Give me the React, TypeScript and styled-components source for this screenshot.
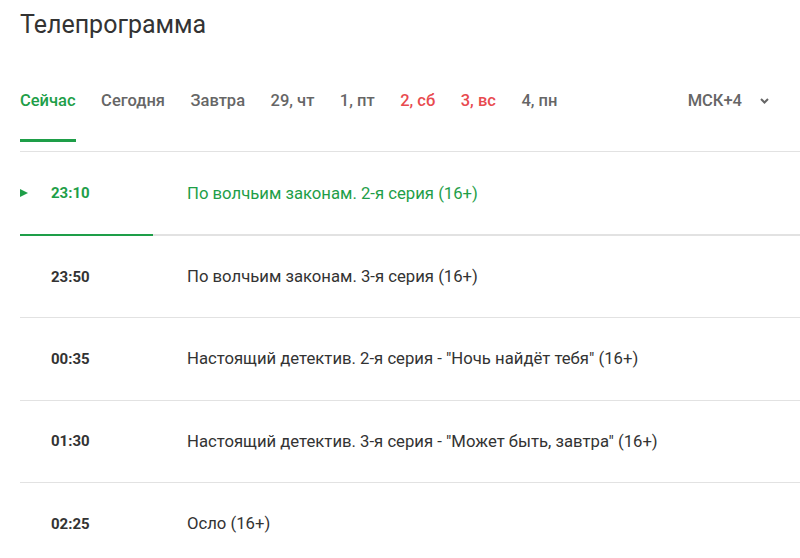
import React from "react";
import styled, { createGlobalStyle } from "styled-components";

const GREEN = "#1e9e48";
const RED = "#e84a4f";

const Global = createGlobalStyle`
  html, body { margin: 0; padding: 0; background: #fff; overflow: hidden; }
  body { font-family: Roboto, "Noto Sans", Arial, sans-serif; color: #333; }
`;

const Page = styled.div`
  padding-left: 20px;
`;

const Title = styled.h1`
  margin: 0;
  padding-top: 9px;
  font-size: 25px;
  line-height: 32px;
  font-weight: 400;
  color: #333;
`;

const TabBar = styled.div`
  display: flex;
  align-items: flex-start;
  margin-top: 46px;
  border-bottom: 1px solid #e2e2e2;
  padding-bottom: 9px;
  padding-right: 31px;
`;

const Tabs = styled.div`
  display: flex;
  gap: 25.5px;
  flex: 1;
`;

const Tab = styled.div<{ $active?: boolean; $weekend?: boolean }>`
  font-size: 16.5px;
  font-weight: 500;
  line-height: 20px;
  padding: 4px 0 28px;
  color: ${(p) => (p.$active ? GREEN : p.$weekend ? RED : "#666")};
  border-bottom: 3px solid ${(p) => (p.$active ? GREEN : "transparent")};
`;

const Zone = styled.div`
  display: flex;
  align-items: center;
  gap: 18px;
  font-size: 16.5px;
  font-weight: 500;
  line-height: 20px;
  padding-top: 4px;
  color: #666;
`;

const Row = styled.div<{ $current?: boolean }>`
  position: relative;
  display: flex;
  align-items: center;
  height: ${(p) => (p.$current ? "82px" : "81.3px")};
  border-bottom: ${(p) => (p.$current ? "2px solid #e2e2e2" : "1px solid #e2e2e2")};
  color: ${(p) => (p.$current ? GREEN : "#333")};
`;

const Marker = styled.div`
  width: 31px;
  display: flex;
  align-items: center;
`;

const Time = styled.div`
  width: 136px;
  font-size: 15px;
  font-weight: 700;
`;

const Name = styled.div`
  font-size: 16.7px;
`;

const Progress = styled.div`
  position: absolute;
  left: 0;
  bottom: -2px;
  height: 2px;
  background: ${GREEN};
`;

const tabs = [
  { t: "Сейчас", active: true },
  { t: "Сегодня" },
  { t: "Завтра" },
  { t: "29, чт" },
  { t: "1, пт" },
  { t: "2, сб", weekend: true },
  { t: "3, вс", weekend: true },
  { t: "4, пн" },
];

const programs = [
  { time: "23:10", name: "По волчьим законам. 2-я серия (16+)", current: true, progress: 133 },
  { time: "23:50", name: "По волчьим законам. 3-я серия (16+)" },
  { time: "00:35", name: "Настоящий детектив. 2-я серия - \"Ночь найдёт тебя\" (16+)" },
  { time: "01:30", name: "Настоящий детектив. 3-я серия - \"Может быть, завтра\" (16+)" },
  { time: "02:25", name: "Осло (16+)" },
];

export default function App() {
  return (
    <Page>
      <Global />
      <Title>Телепрограмма</Title>
      <TabBar>
        <Tabs>
          {tabs.map((t) => (
            <Tab key={t.t} $active={t.active} $weekend={t.weekend}>
              {t.t}
            </Tab>
          ))}
        </Tabs>
        <Zone>
          МСК+4
          <svg width="9" height="6" viewBox="0 0 9 6">
            <polyline points="1,1 4.5,4.5 8,1" fill="none" stroke="#666" strokeWidth="2" />
          </svg>
        </Zone>
      </TabBar>
      {programs.map((p) => (
        <Row key={p.time} $current={p.current}>
          <Marker>
            {p.current && (
              <svg width="8" height="8" viewBox="0 0 8 8">
                <polygon points="0,0 8,4 0,8" fill={GREEN} />
              </svg>
            )}
          </Marker>
          <Time>{p.time}</Time>
          <Name>{p.name}</Name>
          {p.current && <Progress style={{ width: p.progress }} />}
        </Row>
      ))}
    </Page>
  );
}
